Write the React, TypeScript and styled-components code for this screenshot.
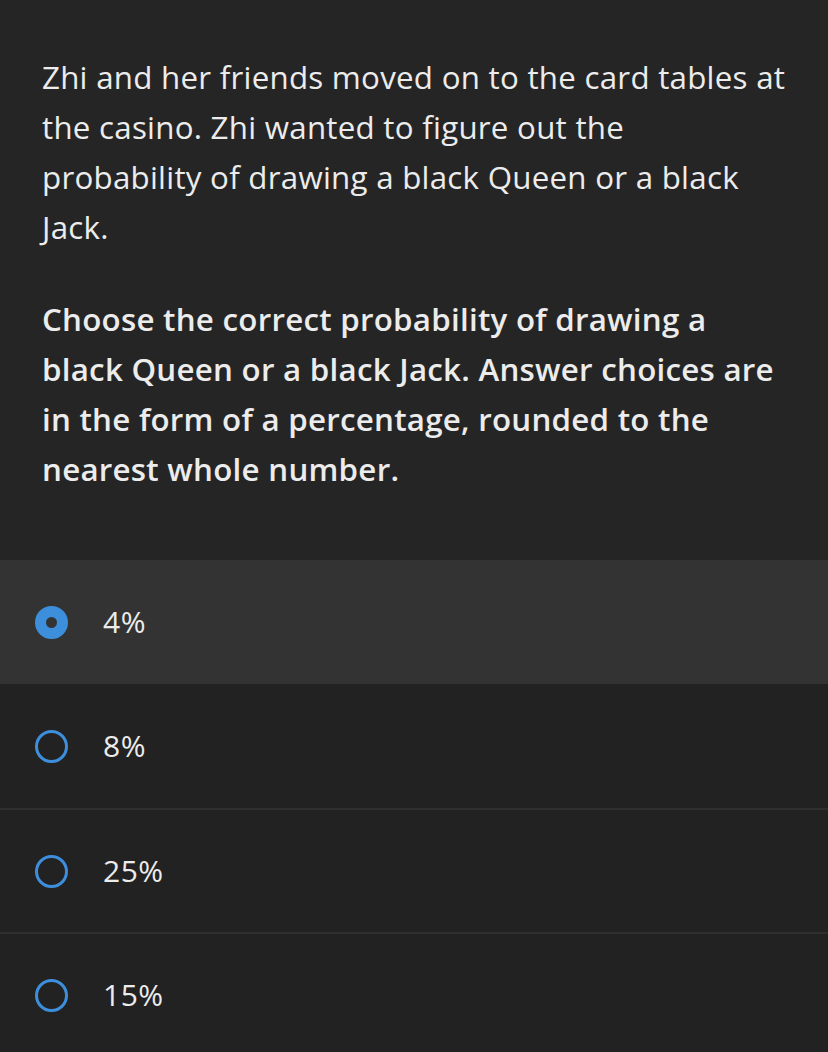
import React from "react";
import styled, { createGlobalStyle } from "styled-components";

const Global = createGlobalStyle`
  html, body { margin: 0; padding: 0; background: #222222; }
  body { font-family: "Open Sans", "Noto Sans", sans-serif; -webkit-font-smoothing: antialiased; }
`;

const Page = styled.div`
  width: 828px;
  min-height: 1052px;
  background: #222222;
  display: flex;
  flex-direction: column;
`;

const Question = styled.section`
  background: #252525;
  padding: 52px 40px 66px 42px;
  display: flex;
  flex-direction: column;
  gap: 42px;
`;

const Paragraph = styled.p<{ $bold?: boolean }>`
  margin: 0;
  color: #ececec;
  font-size: 31.3px;
  line-height: 50px;
  letter-spacing: 0.25px;
  font-weight: ${(p) => (p.$bold ? 600 : 400)};
`;

const Options = styled.div`
  display: flex;
  flex-direction: column;
`;

const Option = styled.div<{ $selected?: boolean; $first?: boolean }>`
  display: flex;
  align-items: center;
  gap: 35px;
  height: 124px;
  padding-left: 35px;
  box-sizing: border-box;
  background: ${(p) => (p.$selected ? "#333333" : "#222222")};
  border-top: ${(p) => (p.$first ? "none" : "2px solid #2f2f2f")};
  cursor: pointer;
`;

const Radio = styled.span<{ $selected?: boolean }>`
  width: 33px;
  height: 33px;
  box-sizing: border-box;
  border-radius: 50%;
  border: ${(p) => (p.$selected ? "11.5px solid #3d8fdc" : "3.5px solid #3d8fdc")};
  background: ${(p) => (p.$selected ? "#333333" : "transparent")};
  flex: none;
`;

const OptionText = styled.span`
  color: #ececec;
  font-size: 30px;
  line-height: 1;
  letter-spacing: 0.5px;
`;

const choices = ["4%", "8%", "25%", "15%"];

export default function App() {
  return (
    <Page>
      <Global />
      <Question>
        <Paragraph>
          Zhi and her friends moved on to the card tables at the casino. Zhi wanted to figure out the
          probability of drawing a black Queen or a black Jack.
        </Paragraph>
        <Paragraph $bold>
          Choose the correct probability of drawing a black Queen or a black Jack. Answer choices are
          in the form of a percentage, rounded to the nearest whole number.
        </Paragraph>
      </Question>
      <Options>
        {choices.map((c, i) => (
          <Option key={c} $selected={i === 0} $first={i <= 1}>
            <Radio $selected={i === 0} />
            <OptionText>{c}</OptionText>
          </Option>
        ))}
      </Options>
    </Page>
  );
}
